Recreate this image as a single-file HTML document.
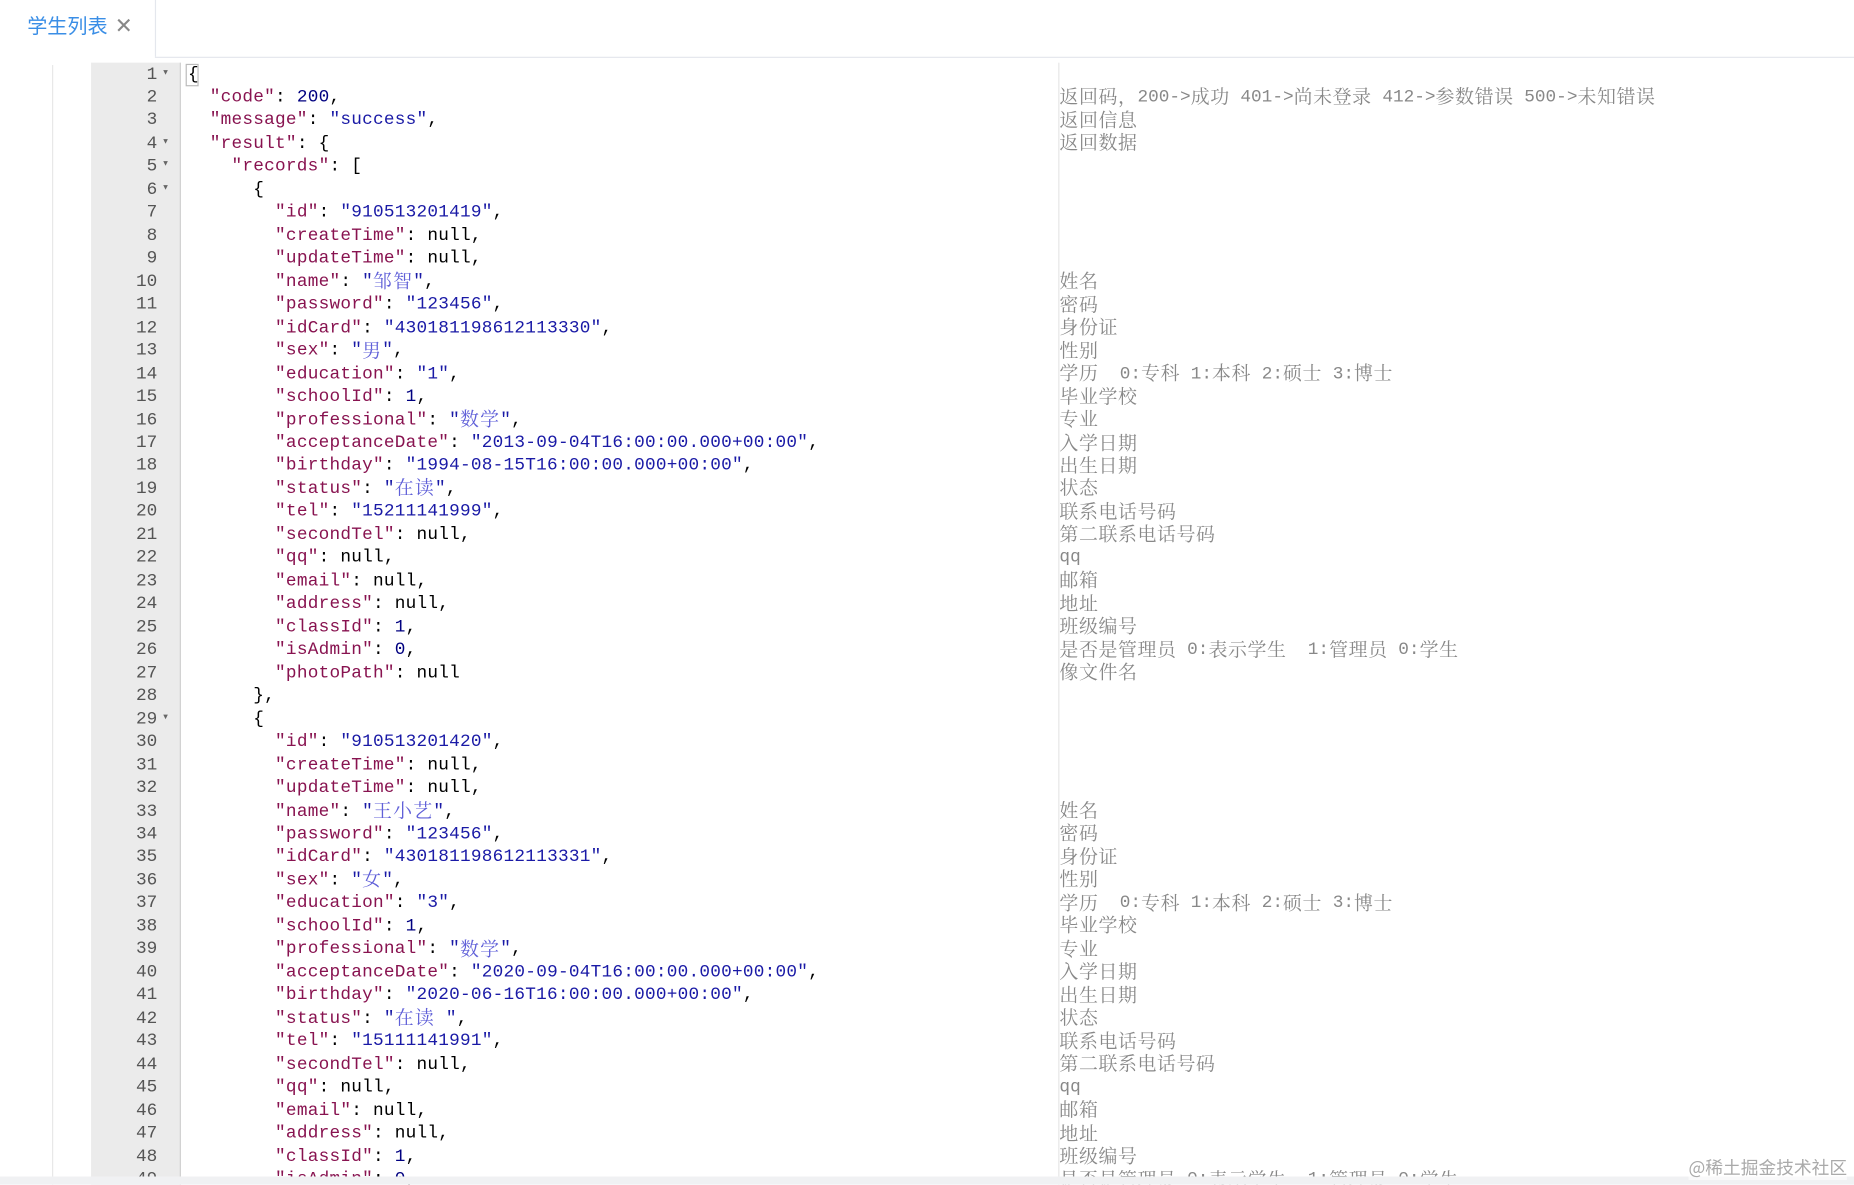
<!DOCTYPE html>
<html><head><meta charset="utf-8"><style>
html,body{margin:0;padding:0;width:1854px;height:1185px;overflow:hidden;background:#fff}
#w{position:absolute;left:0;top:0;width:1568px;height:1002px;transform:scale(1.18240);transform-origin:0 0;overflow:hidden}
.tab{position:absolute;left:23px;top:8px;font:17px "Liberation Sans","Noto Sans CJK SC",sans-serif;color:#3a8ee6}
.tab span{color:#888;margin-left:6px;font-size:18px}
.tl{position:absolute;left:131px;top:0;width:1px;height:48px;background:#e4e7ed}
.tb{position:absolute;left:131px;top:48px;right:0;height:1px;background:#e4e7ed}
.ml{position:absolute;left:44px;top:55px;width:1px;height:950px;background:#e8e8e8}
.gut{position:absolute;left:77px;top:53px;width:75px;height:950px;background:#ebebeb;border-right:1px solid #d0d0d0}
.dv{position:absolute;left:895px;top:53px;width:1px;height:950px;background:#e6e6e6}
#rows{position:absolute;left:0;top:54.5px;width:1568px}
.r{position:relative;height:19.47px}
.ln,.cd,.cm,.ar{position:absolute;top:0;height:19.47px;line-height:19.47px;font:15px "Liberation Mono",monospace;white-space:pre}
.ln{left:77px;width:56px;text-align:right;color:#555}
.ar{left:137px;font-size:10px;color:#666;top:1px}
.cd{left:159px;color:#000;letter-spacing:0.2px}
.cm{left:896px;color:#888}
.k{color:#881350}.s{color:#1a1aa6}.n{color:#000080}
.c{display:inline-block;vertical-align:top;height:19.47px;line-height:19.47px;font-family:"Noto Serif CJK SC",serif;font-size:16px;letter-spacing:1px;position:relative;top:-2.5px}
.s .c{color:#6060d8}
.cm .c{letter-spacing:0.5px}
.bot{position:absolute;left:0;top:995px;width:1568px;height:7px;background:#f0f1f3}
.wm{position:absolute;left:1428px;top:977px;font:15px "Noto Sans CJK SC",sans-serif;color:#aaa;background:rgba(255,255,255,.6)}
.br{position:absolute;left:157px;top:54px;width:9px;height:17px;border:1px solid #bbb}
</style></head><body><div id="w">
<div class="tab">学生列表<span>✕</span></div><div class="tl"></div><div class="tb"></div>
<div class="ml"></div><div class="gut"></div><div class="dv"></div><div class="br"></div>
<div id="rows">
<div class="r"><div class="ln">1</div><div class="ar">▾</div><div class="cd">{</div></div>
<div class="r"><div class="ln">2</div><div class="cd">  <span class="k">"code"</span>: <span class="n">200</span>,</div><div class="cm"><span class="c">返回码，</span>200-><span class="c">成功</span> 401-><span class="c">尚未登录</span> 412-><span class="c">参数错误</span> 500-><span class="c">未知错误</span></div></div>
<div class="r"><div class="ln">3</div><div class="cd">  <span class="k">"message"</span>: <span class="s">"success"</span>,</div><div class="cm"><span class="c">返回信息</span></div></div>
<div class="r"><div class="ln">4</div><div class="ar">▾</div><div class="cd">  <span class="k">"result"</span>: {</div><div class="cm"><span class="c">返回数据</span></div></div>
<div class="r"><div class="ln">5</div><div class="ar">▾</div><div class="cd">    <span class="k">"records"</span>: [</div></div>
<div class="r"><div class="ln">6</div><div class="ar">▾</div><div class="cd">      {</div></div>
<div class="r"><div class="ln">7</div><div class="cd">        <span class="k">"id"</span>: <span class="s">"910513201419"</span>,</div></div>
<div class="r"><div class="ln">8</div><div class="cd">        <span class="k">"createTime"</span>: null,</div></div>
<div class="r"><div class="ln">9</div><div class="cd">        <span class="k">"updateTime"</span>: null,</div></div>
<div class="r"><div class="ln">10</div><div class="cd">        <span class="k">"name"</span>: <span class="s">"<span class="c">邹智</span>"</span>,</div><div class="cm"><span class="c">姓名</span></div></div>
<div class="r"><div class="ln">11</div><div class="cd">        <span class="k">"password"</span>: <span class="s">"123456"</span>,</div><div class="cm"><span class="c">密码</span></div></div>
<div class="r"><div class="ln">12</div><div class="cd">        <span class="k">"idCard"</span>: <span class="s">"430181198612113330"</span>,</div><div class="cm"><span class="c">身份证</span></div></div>
<div class="r"><div class="ln">13</div><div class="cd">        <span class="k">"sex"</span>: <span class="s">"<span class="c">男</span>"</span>,</div><div class="cm"><span class="c">性别</span></div></div>
<div class="r"><div class="ln">14</div><div class="cd">        <span class="k">"education"</span>: <span class="s">"1"</span>,</div><div class="cm"><span class="c">学历</span>  0:<span class="c">专科</span> 1:<span class="c">本科</span> 2:<span class="c">硕士</span> 3:<span class="c">博士</span></div></div>
<div class="r"><div class="ln">15</div><div class="cd">        <span class="k">"schoolId"</span>: <span class="n">1</span>,</div><div class="cm"><span class="c">毕业学校</span></div></div>
<div class="r"><div class="ln">16</div><div class="cd">        <span class="k">"professional"</span>: <span class="s">"<span class="c">数学</span>"</span>,</div><div class="cm"><span class="c">专业</span></div></div>
<div class="r"><div class="ln">17</div><div class="cd">        <span class="k">"acceptanceDate"</span>: <span class="s">"2013-09-04T16:00:00.000+00:00"</span>,</div><div class="cm"><span class="c">入学日期</span></div></div>
<div class="r"><div class="ln">18</div><div class="cd">        <span class="k">"birthday"</span>: <span class="s">"1994-08-15T16:00:00.000+00:00"</span>,</div><div class="cm"><span class="c">出生日期</span></div></div>
<div class="r"><div class="ln">19</div><div class="cd">        <span class="k">"status"</span>: <span class="s">"<span class="c">在读</span>"</span>,</div><div class="cm"><span class="c">状态</span></div></div>
<div class="r"><div class="ln">20</div><div class="cd">        <span class="k">"tel"</span>: <span class="s">"15211141999"</span>,</div><div class="cm"><span class="c">联系电话号码</span></div></div>
<div class="r"><div class="ln">21</div><div class="cd">        <span class="k">"secondTel"</span>: null,</div><div class="cm"><span class="c">第二联系电话号码</span></div></div>
<div class="r"><div class="ln">22</div><div class="cd">        <span class="k">"qq"</span>: null,</div><div class="cm">qq</div></div>
<div class="r"><div class="ln">23</div><div class="cd">        <span class="k">"email"</span>: null,</div><div class="cm"><span class="c">邮箱</span></div></div>
<div class="r"><div class="ln">24</div><div class="cd">        <span class="k">"address"</span>: null,</div><div class="cm"><span class="c">地址</span></div></div>
<div class="r"><div class="ln">25</div><div class="cd">        <span class="k">"classId"</span>: <span class="n">1</span>,</div><div class="cm"><span class="c">班级编号</span></div></div>
<div class="r"><div class="ln">26</div><div class="cd">        <span class="k">"isAdmin"</span>: <span class="n">0</span>,</div><div class="cm"><span class="c">是否是管理员</span> 0:<span class="c">表示学生</span>  1:<span class="c">管理员</span> 0:<span class="c">学生</span></div></div>
<div class="r"><div class="ln">27</div><div class="cd">        <span class="k">"photoPath"</span>: null</div><div class="cm"><span class="c">像文件名</span></div></div>
<div class="r"><div class="ln">28</div><div class="cd">      },</div></div>
<div class="r"><div class="ln">29</div><div class="ar">▾</div><div class="cd">      {</div></div>
<div class="r"><div class="ln">30</div><div class="cd">        <span class="k">"id"</span>: <span class="s">"910513201420"</span>,</div></div>
<div class="r"><div class="ln">31</div><div class="cd">        <span class="k">"createTime"</span>: null,</div></div>
<div class="r"><div class="ln">32</div><div class="cd">        <span class="k">"updateTime"</span>: null,</div></div>
<div class="r"><div class="ln">33</div><div class="cd">        <span class="k">"name"</span>: <span class="s">"<span class="c">王小艺</span>"</span>,</div><div class="cm"><span class="c">姓名</span></div></div>
<div class="r"><div class="ln">34</div><div class="cd">        <span class="k">"password"</span>: <span class="s">"123456"</span>,</div><div class="cm"><span class="c">密码</span></div></div>
<div class="r"><div class="ln">35</div><div class="cd">        <span class="k">"idCard"</span>: <span class="s">"430181198612113331"</span>,</div><div class="cm"><span class="c">身份证</span></div></div>
<div class="r"><div class="ln">36</div><div class="cd">        <span class="k">"sex"</span>: <span class="s">"<span class="c">女</span>"</span>,</div><div class="cm"><span class="c">性别</span></div></div>
<div class="r"><div class="ln">37</div><div class="cd">        <span class="k">"education"</span>: <span class="s">"3"</span>,</div><div class="cm"><span class="c">学历</span>  0:<span class="c">专科</span> 1:<span class="c">本科</span> 2:<span class="c">硕士</span> 3:<span class="c">博士</span></div></div>
<div class="r"><div class="ln">38</div><div class="cd">        <span class="k">"schoolId"</span>: <span class="n">1</span>,</div><div class="cm"><span class="c">毕业学校</span></div></div>
<div class="r"><div class="ln">39</div><div class="cd">        <span class="k">"professional"</span>: <span class="s">"<span class="c">数学</span>"</span>,</div><div class="cm"><span class="c">专业</span></div></div>
<div class="r"><div class="ln">40</div><div class="cd">        <span class="k">"acceptanceDate"</span>: <span class="s">"2020-09-04T16:00:00.000+00:00"</span>,</div><div class="cm"><span class="c">入学日期</span></div></div>
<div class="r"><div class="ln">41</div><div class="cd">        <span class="k">"birthday"</span>: <span class="s">"2020-06-16T16:00:00.000+00:00"</span>,</div><div class="cm"><span class="c">出生日期</span></div></div>
<div class="r"><div class="ln">42</div><div class="cd">        <span class="k">"status"</span>: <span class="s">"<span class="c">在读</span> "</span>,</div><div class="cm"><span class="c">状态</span></div></div>
<div class="r"><div class="ln">43</div><div class="cd">        <span class="k">"tel"</span>: <span class="s">"15111141991"</span>,</div><div class="cm"><span class="c">联系电话号码</span></div></div>
<div class="r"><div class="ln">44</div><div class="cd">        <span class="k">"secondTel"</span>: null,</div><div class="cm"><span class="c">第二联系电话号码</span></div></div>
<div class="r"><div class="ln">45</div><div class="cd">        <span class="k">"qq"</span>: null,</div><div class="cm">qq</div></div>
<div class="r"><div class="ln">46</div><div class="cd">        <span class="k">"email"</span>: null,</div><div class="cm"><span class="c">邮箱</span></div></div>
<div class="r"><div class="ln">47</div><div class="cd">        <span class="k">"address"</span>: null,</div><div class="cm"><span class="c">地址</span></div></div>
<div class="r"><div class="ln">48</div><div class="cd">        <span class="k">"classId"</span>: <span class="n">1</span>,</div><div class="cm"><span class="c">班级编号</span></div></div>
<div class="r"><div class="ln">49</div><div class="cd">        <span class="k">"isAdmin"</span>: <span class="n">0</span>,</div><div class="cm"><span class="c">是否是管理员</span> 0:<span class="c">表示学生</span>  1:<span class="c">管理员</span> 0:<span class="c">学生</span></div></div>
</div>
<div class="bot"></div>
<div class="wm">@稀土掘金技术社区</div>
</div></body></html>
